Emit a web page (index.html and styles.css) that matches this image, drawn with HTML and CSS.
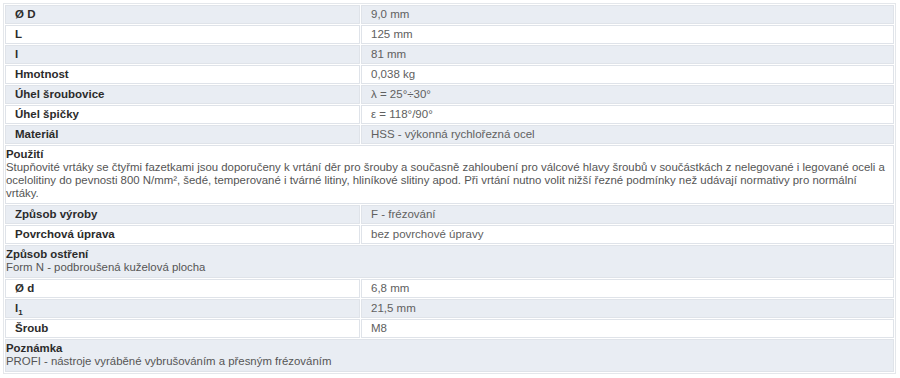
FILE: index.html
```html
<!DOCTYPE html>
<html lang="cs">
<head>
<meta charset="utf-8">
<title>Parametry</title>
<link rel="stylesheet" href="styles.css">
</head>
<body>
<div class="wrap">
<table class="params">
  <colgroup><col class="c-label"><col class="c-value"></colgroup>
  <tr class="odd"><th>Ø D</th><td>9,0 mm</td></tr>
  <tr class="even"><th>L</th><td>125 mm</td></tr>
  <tr class="odd"><th>l</th><td>81 mm</td></tr>
  <tr class="even"><th>Hmotnost</th><td>0,038 kg</td></tr>
  <tr class="odd"><th>Úhel šroubovice</th><td>λ = 25°÷30°</td></tr>
  <tr class="even"><th>Úhel špičky</th><td>ε = 118°/90°</td></tr>
  <tr class="odd"><th>Materiál</th><td>HSS - výkonná rychlořezná ocel</td></tr>
  <tr class="even"><td class="block" colspan="2"><b>Použití</b><br>Stupňovité vrtáky se čtyřmi fazetkami jsou doporučeny k vrtání děr pro šrouby a současně zahloubení pro válcové hlavy šroubů v součástkách z nelegované i legované oceli a<br>ocelolitiny do pevnosti 800 N/mm², šedé, temperované i tvárné litiny, hliníkové slitiny apod. Při vrtání nutno volit nižší řezné podmínky než udávají normativy pro normální<br>vrtáky.</td></tr>
  <tr class="odd"><th>Způsob výroby</th><td>F - frézování</td></tr>
  <tr class="even"><th>Povrchová úprava</th><td>bez povrchové úpravy</td></tr>
  <tr class="odd"><td class="block" colspan="2"><b>Způsob ostření</b><br>Form N - podbroušená kuželová plocha</td></tr>
  <tr class="even"><th>Ø d</th><td>6,8 mm</td></tr>
  <tr class="odd"><th>l<sub>1</sub></th><td>21,5 mm</td></tr>
  <tr class="even"><th>Šroub</th><td>M8</td></tr>
  <tr class="odd"><td class="block" colspan="2"><b>Poznámka</b><br>PROFI - nástroje vyráběné vybrušováním a přesným frézováním</td></tr>
</table>
</div>
</body>
</html>
```

FILE: styles.css
```css
html, body {
  margin: 0;
  padding: 0;
  background: #ffffff;
}
.wrap {
  padding: 3px 4px 0 3px;
}
.params {
  width: 893px;
  border: 1px solid #e4e7eb;
  border-spacing: 1px;
  font-family: "Liberation Sans", Arial, sans-serif;
  font-size: 11.5px;
  line-height: 13px;
  table-layout: fixed;
}
.c-label { width: 355px; }
.params th, .params td {
  border: 1px solid #dfe3e9;
  padding: 2px 9px 2px 9px;
  text-align: left;
  vertical-align: top;
  white-space: nowrap;
}
.params th {
  font-weight: bold;
  color: #2b2b2b;
}
.params td {
  color: #606060;
}
.params td.block {
  color: #555;
  font-size: 11.4px;
  padding: 2px 0 3px 0;
  overflow: visible;
}
.params td.block b {
  color: #2b2b2b;
}
.odd th, .odd td { background: #e9edf3; }
.even th, .even td { background: #ffffff; }
sub {
  font-size: 8px;
  line-height: 0;
  vertical-align: -3px;
}
```
